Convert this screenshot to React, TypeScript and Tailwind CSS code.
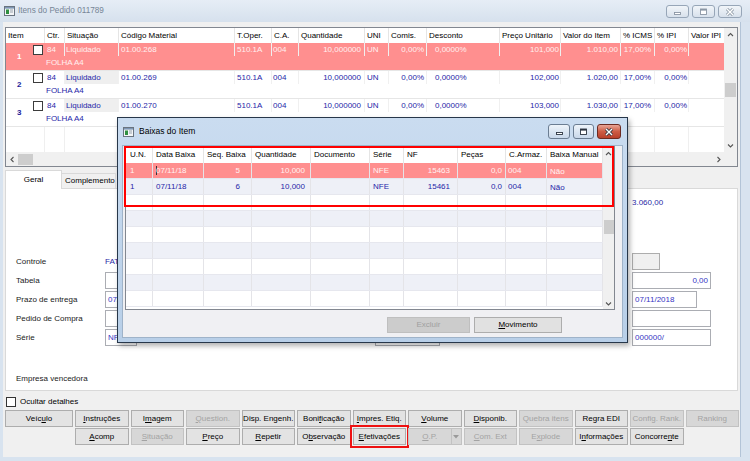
import React from 'react';

const F = "font-['Liberation_Sans',Arial,sans-serif]";

type Col = { h: string; w: string };

const mainCols: Col[] = [
  { h: 'Item', w: 'w-[39px]' },
  { h: 'Ctr.', w: 'w-[20px]' },
  { h: 'Situação', w: 'w-[54px]' },
  { h: 'Código Material', w: 'w-[116px]' },
  { h: 'T.Oper.', w: 'w-[37px]' },
  { h: 'C.A.', w: 'w-[27px]' },
  { h: 'Quantidade', w: 'w-[66px]' },
  { h: 'UNI', w: 'w-[24px]' },
  { h: 'Comis.', w: 'w-[38px]' },
  { h: 'Desconto', w: 'w-[73px]' },
  { h: 'Preço Unitário', w: 'w-[61px]' },
  { h: 'Valor do Item', w: 'w-[60px]' },
  { h: '% ICMS', w: 'w-[34px]' },
  { h: '% IPI', w: 'w-[34px]' },
  { h: 'Valor IPI', w: 'w-[36px]' },
];

const mAlign = [
  '',
  'pl-[2px]',
  'pl-[1px]',
  'pl-[2px]',
  'pl-[2px]',
  'pl-[1px]',
  'justify-end pr-[3px]',
  'pl-[2px]',
  'justify-end pr-[2px]',
  'pl-[8px]',
  'justify-end pr-[1px]',
  'justify-end pr-[2px]',
  'justify-end pr-[3px]',
  'justify-end pr-[1px]',
  '',
];

const items = [
  { n: '1', cod: '01.00.268', preco: '101,000', valor: '1.010,00', sel: true },
  { n: '2', cod: '01.00.269', preco: '102,000', valor: '1.020,00', sel: false },
  { n: '3', cod: '01.00.270', preco: '103,000', valor: '1.030,00', sel: false },
];

const dCols: Col[] = [
  { h: 'U.N.', w: 'w-[27px]' },
  { h: 'Data Baixa', w: 'w-[51px]' },
  { h: 'Seq. Baixa', w: 'w-[48px]' },
  { h: 'Quantidade', w: 'w-[59px]' },
  { h: 'Documento', w: 'w-[59px]' },
  { h: 'Série', w: 'w-[34px]' },
  { h: 'NF', w: 'w-[54px]' },
  { h: 'Peças', w: 'w-[48px]' },
  { h: 'C.Armaz.', w: 'w-[41px]' },
  { h: 'Baixa Manual', w: 'w-[56px]' },
];

const dAlign = [
  'pl-[4px]',
  'pl-[3px]',
  'justify-end pr-[11px]',
  'justify-end pr-[5px]',
  'pl-[3px]',
  'pl-[3px]',
  'justify-end pr-[7px]',
  'justify-end pr-[3px]',
  'pl-[2px]',
  'pl-[3px] pt-[2px]',
];

const baixas = [
  ['1', '07/11/18', '5', '10,000', '', 'NFE', '15463', '0,0', '004', 'Não'],
  ['1', '07/11/18', '6', '10,000', '', 'NFE', '15461', '0,0', '004', 'Não'],
  [], [], [], [], [], [], [],
];

function Chev({ dir }: { dir: 'up' | 'down' | 'left' | 'right' }) {
  const pts = {
    up: '1,5 3.5,2.5 6,5',
    down: '1,2.5 3.5,5 6,2.5',
    left: '4.5,1 2,3.5 4.5,6',
    right: '2.5,1 5,3.5 2.5,6',
  }[dir];
  return (
    <svg width="7" height="7" viewBox="0 0 7 7">
      <polyline points={pts} fill="none" stroke="#555" strokeWidth="1.1" />
    </svg>
  );
}

function AppIcon() {
  return (
    <svg width="11" height="10" viewBox="0 0 11 10" className="shrink-0">
      <rect x="0.5" y="0.5" width="10" height="9" fill="#f3f5f7" stroke="#6a7480" />
      <rect x="1" y="1" width="9" height="1.6" fill="#7d96b4" />
      <rect x="2" y="3.5" width="3" height="4.5" fill="#2f8f3f" />
      <rect x="6" y="3.5" width="3" height="1" fill="#9aa3ad" />
      <rect x="6" y="5.5" width="3" height="1" fill="#9aa3ad" />
    </svg>
  );
}

function Glyph({ kind, light }: { kind: 'min' | 'max' | 'close'; light?: boolean }) {
  const s = light ? '#8a96a4' : '#2c3440';
  if (kind === 'min')
    return (
      <svg width="9" height="8" viewBox="0 0 9 8">
        <rect x="1.5" y="4.5" width="6" height="2" fill="#fff" stroke={s} strokeWidth="0.9" />
      </svg>
    );
  if (kind === 'max')
    return (
      <svg width="9" height="8" viewBox="0 0 9 8">
        <rect x="1.5" y="1" width="6" height="5.5" fill="#fff" stroke={s} strokeWidth="0.9" />
        <rect x="1.5" y="1" width="6" height="1.6" fill={s} />
      </svg>
    );
  return (
    <svg width="10" height="8" viewBox="0 0 10 8">
      <path d="M2 1 L8 7 M8 1 L2 7" stroke={s} strokeWidth="3" />
      <path d="M2 1 L8 7 M8 1 L2 7" stroke="#fff" strokeWidth="1.4" />
    </svg>
  );
}

function U({ t, i }: { t: string; i: number }) {
  if (i < 0) return <>{t}</>;
  return (
    <>
      {t.slice(0, i)}
      <u className="underline-offset-1">{t[i]}</u>
      {t.slice(i + 1)}
    </>
  );
}

function Btn({ t, i = -1, wide, disabled }: { t: string; i?: number; wide?: boolean; disabled?: boolean }) {
  return (
    <div
      className={`${wide ? 'w-[68px]' : 'w-[53.5px]'} h-[17px] shrink-0 flex items-center justify-center border ${
        disabled ? 'bg-[#d7d7d7] border-[#c2c2c2] text-[#a3a3a3]' : 'bg-[#e3e3e3] border-[#adadad] text-black'
      }`}
    >
      <U t={t} i={i} />
    </div>
  );
}

function MainGrid() {
  return (
    <div className="h-[140px] shrink-0 border border-[#828790] bg-white flex flex-col">
      <div className="flex flex-1 min-h-0">
        <div className="flex-1 flex flex-col min-w-0">
          <div className="h-[15px] flex shrink-0">
            {mainCols.map((c) => (
              <div key={c.h} className={`${c.w} shrink-0 h-full flex items-center pl-[2px] border-r border-[#e5e5e5]`}>
                {c.h}
              </div>
            ))}
          </div>
          {items.map((r) => {
            const vals = ['', '84', 'Liquidado', r.cod, '510.1A', '004', '10,000000', 'UN', '0,00%', '0,0000%', r.preco, r.valor, '17,00%', '0,00%', ''];
            return (
              <div
                key={r.n}
                className={`flex h-[28px] shrink-0 border-b border-[#e6e6e6] ${r.sel ? 'bg-[#ff8f8f] text-[#fff0f0]' : 'bg-white text-[#2626a8]'}`}
              >
                <div className="w-[39px] shrink-0 flex items-center">
                  <span className={`ml-[11px] font-bold ${r.sel ? 'text-white' : 'text-[#1c1c9a]'}`}>{r.n}</span>
                  <span className="ml-auto mr-[2px] self-start mt-[2px] w-[10px] h-[10px] border border-[#3c3c3c] bg-white" />
                </div>
                <div className="flex-1 flex flex-col">
                  <div className="flex h-[13px]">
                    {mainCols.slice(1).map((c, k) => (
                      <div
                        key={c.h}
                        className={`${c.w} shrink-0 h-full flex items-center border-r border-[#f0f0f0] ${mAlign[k + 1]} ${
                          k === 1 && !r.sel ? 'bg-[#efefef]' : ''
                        }`}
                      >
                        {vals[k + 1]}
                      </div>
                    ))}
                  </div>
                  <div className="h-[13px] flex items-center pl-[1px]">FOLHA A4</div>
                </div>
              </div>
            );
          })}
          <div className="flex-1 flex">
            {mainCols.map((c) => (
              <div key={c.h} className={`${c.w} shrink-0 border-r border-[#efefef]`} />
            ))}
          </div>
        </div>
        <div className="w-[13px] shrink-0 bg-[#f0f0f0] flex flex-col items-center">
          <div className="h-[13px] flex items-center justify-center">
            <Chev dir="up" />
          </div>
          <div className="mt-[42px] w-[11px] h-[14px] bg-[#cdcdcd]" />
          <div className="mt-auto h-[13px] flex items-center justify-center">
            <Chev dir="down" />
          </div>
        </div>
      </div>
      <div className="h-[14px] shrink-0 flex">
        <div className="flex-1 bg-[#f0f0f0] flex items-center">
          <div className="w-[12px] flex justify-center">
            <Chev dir="left" />
          </div>
          <div className="w-[15px] h-[11px] bg-[#cdcdcd]" />
          <div className="ml-auto w-[12px] flex justify-center">
            <Chev dir="right" />
          </div>
        </div>
        <div className="w-[13px] bg-[#f0f0f0]" />
      </div>
    </div>
  );
}

function Input({ w, v, right }: { w: string; v?: string; right?: boolean }) {
  return (
    <div className={`${w} h-[17px] shrink-0 border border-[#abadb3] bg-white px-[2px] flex items-center text-[#3636c4] ${right ? 'justify-end' : ''}`}>
      {v}
    </div>
  );
}

function FormRow({ label, left, mid, right }: { label: string; left?: React.ReactNode; mid?: React.ReactNode; right?: React.ReactNode }) {
  return (
    <div className="h-[17px] flex items-center">
      <div className="w-[89px] shrink-0 text-[#1a1a1a]">{label}</div>
      <div className="w-[270px] shrink-0 flex items-center">{left}</div>
      <div className="w-[257px] shrink-0 flex items-center">{mid}</div>
      <div className="flex items-center">{right}</div>
    </div>
  );
}

function Panel() {
  return (
    <div className="w-[733px] h-[203px] shrink-0 bg-white border border-[#d9d9d9] pl-[10px] pt-[9px] flex flex-col">
      <div className="h-[10px] flex items-center">
        <div className="w-[616px] shrink-0" />
        <span className="text-[#2a2aa6]">3.060,00</span>
      </div>
      <div className="mt-[45px] flex flex-col gap-[2px]">
        <FormRow
          label="Controle"
          left={<span className="text-[#2a2aa6]">FATURAMENTO</span>}
          right={<div className="w-[28px] h-[17px] bg-[#f0f0f0] border border-[#adadad]" />}
        />
        <FormRow label="Tabela" left={<Input w="w-[120px]" />} mid={<Input w="w-[65px]" />} right={<Input w="w-[79px]" v="0,00" right />} />
        <FormRow label="Prazo de entrega" left={<Input w="w-[65px]" v="07/11/2018" />} mid={<Input w="w-[65px]" />} right={<Input w="w-[65px]" v="07/11/2018" />} />
        <FormRow label="Pedido de Compra" left={<Input w="w-[120px]" />} mid={<Input w="w-[65px]" />} right={<Input w="w-[79px]" />} />
        <FormRow label="Série" left={<Input w="w-[32px]" v="NFE" />} mid={<Input w="w-[65px]" />} right={<Input w="w-[79px]" v="000000/" />} />
      </div>
      <div className="mt-[24px] h-[17px] flex items-center text-[#1a1a1a]">Empresa vencedora</div>
    </div>
  );
}

function Dialog() {
  return (
    <div className="absolute left-[117px] top-[117px] w-[511px] h-[226px] border border-[#27374a] bg-linear-to-b from-[#cadcf0] to-[#b8cfe8] flex flex-col shadow-[2px_3px_5px_rgba(0,0,0,0.3)]">
      <div className="h-[27px] shrink-0 flex items-center pl-[5px] pr-[6px]">
        <AppIcon />
        <span className="ml-[5px] text-[8.5px] text-black">Baixas do Item</span>
        <div className="ml-auto flex gap-[3px] items-center">
          <div className="w-[22px] h-[15px] rounded-[3px] border border-[#6b7d92] bg-linear-to-b from-[#eef4fa] to-[#c9d8ea] flex items-center justify-center">
            <Glyph kind="min" />
          </div>
          <div className="w-[21px] h-[15px] rounded-[3px] border border-[#6b7d92] bg-linear-to-b from-[#eef4fa] to-[#c9d8ea] flex items-center justify-center">
            <Glyph kind="max" />
          </div>
          <div className="w-[24px] h-[15px] rounded-[3px] border border-[#6d2b22] bg-linear-to-b from-[#e8a596] via-[#cd5c45] to-[#b9402b] flex items-center justify-center">
            <Glyph kind="close" />
          </div>
        </div>
      </div>
      <div className="mx-[4px] mb-[4px] flex-1 bg-[#f0f0f3] border border-[#9fb3c9] flex flex-col">
        <div className="ml-[2px] w-[490px] h-[164px] border border-[#828790] bg-white flex overflow-hidden">
          <div className="w-[477px] shrink-0 flex flex-col">
            <div className="h-[16px] shrink-0 flex">
              {dCols.map((c, k) => (
                <div key={c.h} className={`${c.w} shrink-0 h-full flex items-center border-r border-[#e5e5e5] ${k === 0 ? 'pl-[4px]' : 'pl-[3px]'}`}>
                  {c.h}
                </div>
              ))}
            </div>
            {baixas.map((r, i) => (
              <div
                key={i}
                className={`h-[16px] shrink-0 flex border-b border-[#e6e7ee] ${
                  i === 0 ? 'bg-[#ff8f8f] text-[#fff2f2]' : i % 2 === 1 ? 'bg-[#eef0f7] text-[#2626a8]' : 'bg-white'
                }`}
              >
                {dCols.map((c, k) => (
                  <div key={c.h} className={`${c.w} shrink-0 h-full flex items-center border-r border-[#e4e4e8] ${dAlign[k]}`}>
                    {i === 0 && k === 1 && <span className="w-px h-[9px] bg-[#333] mr-[-1px]" />}
                    {r[k] ?? ''}
                  </div>
                ))}
              </div>
            ))}
          </div>
          <div className="w-[11px] shrink-0 bg-[#f0f0f0] flex flex-col items-center">
            <div className="h-[12px] flex items-center justify-center">
              <Chev dir="up" />
            </div>
            <div className="mt-[61px] w-[10px] h-[14px] bg-[#cdcdcd]" />
            <div className="mt-auto h-[11px] flex items-center justify-center">
              <Chev dir="down" />
            </div>
          </div>
        </div>
        <div className="ml-[264px] mt-[7px] flex gap-[4px]">
          <div className="w-[83px] h-[16px] bg-[#cccccc] border border-[#bfbfbf] text-[#a0a0a0] flex items-center justify-center">Excluir</div>
          <div className="w-[88px] h-[16px] bg-[#e1e1e1] border border-[#adadad] flex items-center justify-center">
            <U t="Movimento" i={0} />
          </div>
        </div>
      </div>
      <div className="absolute left-[6px] top-[28px] w-[490px] h-[61px] border-2 border-[#ff0000]" />
    </div>
  );
}

export default function App() {
  return (
    <div className={`relative w-[750px] h-[461px] overflow-hidden bg-[#d8e3ef] ${F} text-[8px] leading-none text-black select-none`}>
      {/* main window title */}
      <div className="h-[22px] flex items-center pl-[4px] pr-[8px] bg-linear-to-b from-[#e6edf6] to-[#d6e1ed]">
        <AppIcon />
        <span className="ml-[3px] text-[8.2px] text-[#768596]">Itens do Pedido 011789</span>
        <div className="ml-auto self-start mt-[5px] flex gap-[3px]">
          <div className="w-[23px] h-[13px] rounded-[3px] border border-[#97a6b8] bg-linear-to-b from-[#f1f5f9] to-[#d8e1ec] flex items-center justify-center">
            <Glyph kind="min" light />
          </div>
          <div className="w-[23px] h-[13px] rounded-[3px] border border-[#97a6b8] bg-linear-to-b from-[#f1f5f9] to-[#d8e1ec] flex items-center justify-center">
            <Glyph kind="max" light />
          </div>
          <div className="w-[24px] h-[13px] rounded-[3px] border border-[#97a6b8] bg-linear-to-b from-[#f1f5f9] to-[#d8e1ec] flex items-center justify-center">
            <Glyph kind="close" light />
          </div>
        </div>
      </div>

      {/* client area */}
      <div className="ml-[3px] w-[738px] h-[435px] bg-[#f0f0f0] border-r border-[#b3c4d7] px-[2px] pt-[5px] flex flex-col">
        <MainGrid />

        {/* tabs */}
        <div className="h-[21px] shrink-0 flex items-end relative z-10">
          <div className="w-[57px] h-[19px] -mb-px bg-white border border-b-0 border-[#d9d9d9] flex items-center justify-center">Geral</div>
          <div className="w-[54px] h-[15px] bg-[#f0f0f0] border border-l-0 border-b-0 border-[#d9d9d9] flex items-center pl-[3px]">Complemento</div>
        </div>

        <Panel />

        <div className="mt-[5px] h-[12px] shrink-0 flex items-center gap-[4px] pl-[1px]">
          <span className="w-[10px] h-[10px] border border-[#333] bg-white" />
          <span>Ocultar detalhes</span>
        </div>

        <div className="mt-[2px] flex gap-[2px]">
          <Btn t="Veículo" i={4} wide />
          <Btn t="Instruções" i={0} />
          <Btn t="Imagem" i={1} />
          <Btn t="Question." i={0} disabled />
          <Btn t="Disp. Engenh." />
          <Btn t="Bonificação" i={4} />
          <Btn t="Impres. Etiq." i={0} />
          <Btn t="Volume" i={0} />
          <Btn t="Disponib." i={0} />
          <Btn t="Quebra itens" disabled />
          <Btn t="Regra EDI" />
          <Btn t="Config. Rank." disabled />
          <Btn t="Ranking" disabled />
        </div>
        <div className="mt-[1px] pl-[70px] flex gap-[2px]">
          <Btn t="Acomp" i={0} />
          <Btn t="Situação" i={0} disabled />
          <Btn t="Preço" i={0} />
          <Btn t="Repetir" i={0} />
          <Btn t="Observação" i={1} />
          <div className="outline-2 outline-[#ee1111] outline-offset-[1px]">
            <Btn t="Efetivações" i={0} />
          </div>
          <div className="w-[53.5px] h-[17px] shrink-0 flex border border-[#c2c2c2] bg-[#d7d7d7] text-[#a3a3a3]">
            <div className="flex-1 flex items-center justify-center">
              <U t="O.P." i={0} />
            </div>
            <div className="w-[10px] border-l border-[#c2c2c2] flex items-center justify-center">
              <svg width="6" height="4" viewBox="0 0 6 4">
                <polygon points="0,0 6,0 3,3.5" fill="#9a9a9a" />
              </svg>
            </div>
          </div>
          <Btn t="Com. Ext" i={0} disabled />
          <Btn t="Explode" i={1} disabled />
          <Btn t="Informações" i={1} />
          <Btn t="Concorrente" i={8} />
        </div>
      </div>

      <Dialog />
    </div>
  );
}
